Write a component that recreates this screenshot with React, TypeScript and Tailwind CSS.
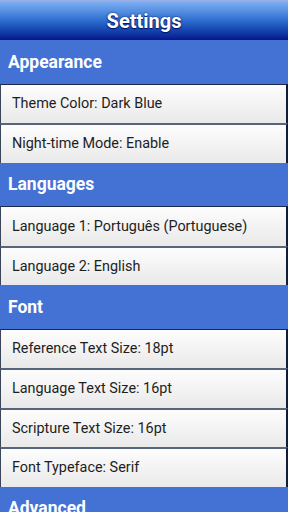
import React from 'react';

const sections = [
  { title: 'Appearance', items: ['Theme Color: Dark Blue', 'Night-time Mode: Enable'] },
  { title: 'Languages', items: ['Language 1: Português (Portuguese)', 'Language 2: English'] },
  {
    title: 'Font',
    items: [
      'Reference Text Size: 18pt',
      'Language Text Size: 16pt',
      'Scripture Text Size: 16pt',
      'Font Typeface: Serif',
    ],
  },
  { title: 'Advanced', items: [] as string[] },
];

const App = () => {
  return (
    <div className="w-[288px] h-[512px] overflow-hidden bg-[#4472d4] font-['Roboto',sans-serif]">
      {/* Title bar */}
      <div className="h-[40px] flex items-center justify-center border-t border-[#9ab0e6] bg-gradient-to-b from-[#80b2f4] via-[#2d6ed0] to-[#0b138c]">
        <h1 className="text-white text-[20px] font-bold [text-shadow:0_0_2px_#001060,0_1px_1px_#001060]">
          Settings
        </h1>
      </div>

      {sections.map((s) => (
        <div key={s.title}>
          <div className="h-[43.5px] flex items-center pl-2 text-white text-[17.5px] font-bold">
            {s.title}
          </div>
          {s.items.map((item, i) => (
            <div
              key={item}
              className={
                'h-[39.5px] flex items-center pl-[11px] pt-[1px] text-[14.4px] text-[#1e1e1e] bg-gradient-to-b from-[#fdfdfd] to-[#e9e9e9] border-l border-r-2 border-l-[#3a4658] border-r-[#0f1d36] ' +
                (i === 0 ? 'border-t border-t-[#1b2a4c]' : 'border-t-2 border-t-[#56657c]')
              }
            >
              {item}
            </div>
          ))}
        </div>
      ))}
    </div>
  );
};

export default App;
